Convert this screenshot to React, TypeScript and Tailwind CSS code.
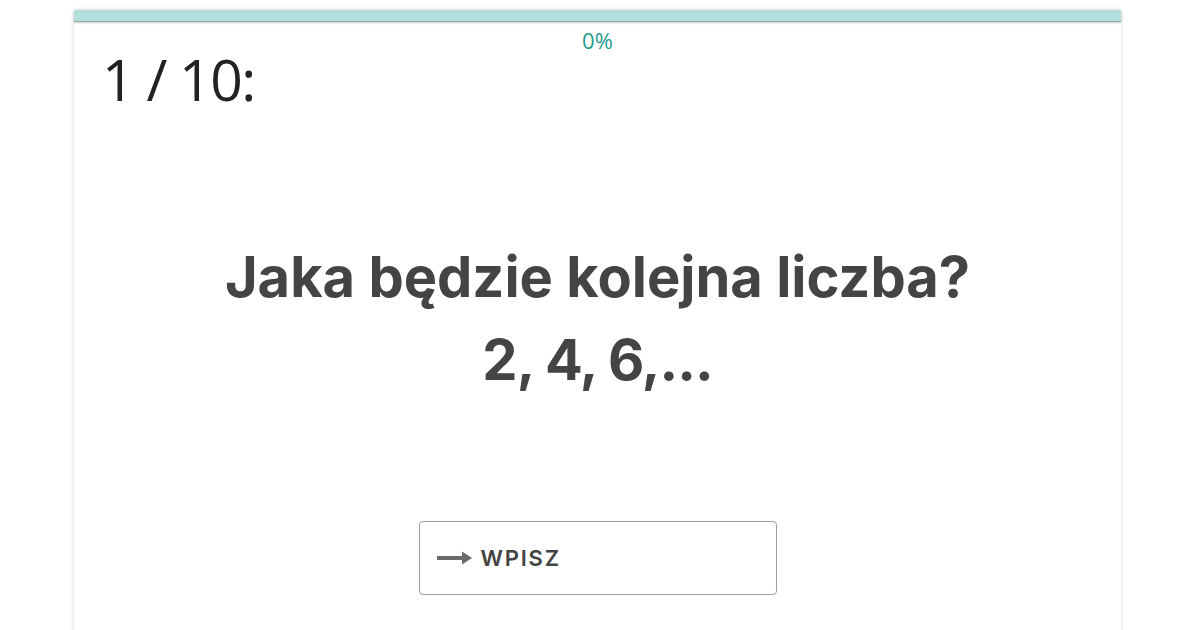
export default function App() {
  return (
    <div className="w-[1200px] h-[630px] bg-white overflow-hidden" style={{ fontFamily: '"Open Sans", sans-serif' }}>
      <div className="ml-[74px] w-[1047px] mt-[10px] h-[640px] bg-white shadow-[0_0_4px_rgba(0,0,0,0.18)] flex flex-col">
        {/* progress bar */}
        <div className="h-[12px] bg-[#b2dfdb] border-b border-[#9aa6a5] shadow-[0_1px_2px_rgba(0,0,0,0.2)]" />
        <div className="relative">
          <div className="absolute left-0 right-0 top-[7px] text-center text-[22px] leading-none text-[#1f9c90]">0%</div>
        </div>
        <div className="pl-[28px] pt-[29px] text-[57px] leading-none tracking-[-1.5px] text-[#222]">1 / 10:</div>
        <div
          className="mt-[128px] flex flex-col items-center text-[#444] font-bold text-[56px] leading-[83px]"
          style={{ fontFamily: 'Inter, sans-serif' }}
        >
          <div>Jaka będzie kolejna liczba?</div>
          <div className="tracking-[-1px]">2, 4, 6,...</div>
        </div>
        <div className="mt-[119px] flex justify-center">
          <button className="w-[358px] h-[74px] border border-[#9e9e9e] rounded-[4px] flex items-center pl-[17px] gap-[9px] text-[#444]">
            <svg width="35" height="14" viewBox="0 0 35 14">
              <rect x="0" y="5" width="26" height="4" fill="#6b6b6b" />
              <polygon points="25,0.5 35,7 25,13.5" fill="#6b6b6b" />
            </svg>
            <span className="text-[22px] font-semibold tracking-[1.8px]" style={{ fontFamily: 'Inter, sans-serif' }}>WPISZ</span>
          </button>
        </div>
      </div>
    </div>
  );
}
